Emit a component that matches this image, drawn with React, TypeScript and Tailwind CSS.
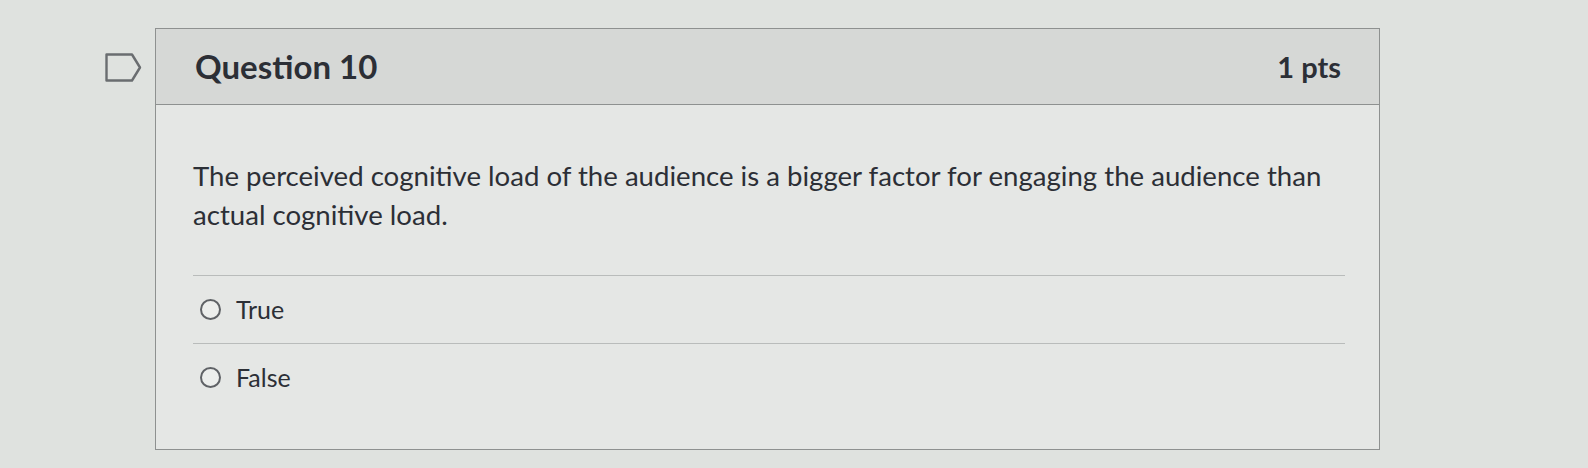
import { Fragment } from "react";

const ANSWERS = ["True", "False"];

function FlagIcon() {
  return (
    <svg width="37" height="29" viewBox="0 0 37 29" fill="none">
      <path d="M1.5 1.5 H27 L35 14.5 L27 27.5 H1.5 Z" stroke="#6a6d70" strokeWidth="2.4" strokeLinejoin="round" />
    </svg>
  );
}

export default function App() {
  return (
    <div className="w-[1588px] h-[468px] bg-[#dfe2df] font-['Lato','Liberation_Sans',sans-serif] text-[#2c2f36] overflow-hidden">
      <div className="flex pt-[28px] pl-[105px]">
        <div className="w-[50px] pt-[25px] shrink-0">
          <FlagIcon />
        </div>
        <div className="w-[1225px] h-[422px] border border-[#8e9190] bg-[#e5e7e5] flex flex-col">
          {/* Header */}
          <div className="h-[76px] shrink-0 flex items-center justify-between pl-[39px] pr-[38px] bg-[#d6d8d6] border-b border-[#8e9190]">
            <span className="text-[33px] font-bold">Question 10</span>
            <span className="text-[29px] font-bold">1 pts</span>
          </div>

          {/* Body */}
          <div className="flex-1 pl-[37px] pr-[34px] pt-[51px]">
            <p className="text-[27.6px] leading-[39px] max-w-[1155px]">
              The perceived cognitive load of the audience is a bigger factor for engaging the audience than actual cognitive load.
            </p>
            <div className="mt-[41px]">
              {ANSWERS.map(a => (
                <Fragment key={a}>
                  <div className="h-px bg-[#b9bcbb]" />
                  <div className="h-[67px] flex items-center gap-[15px] pl-[7px]">
                    <span className="w-[21px] h-[21px] rounded-full border-2 border-[#5f6266] bg-[#eceeec] shrink-0" />
                    <span className="text-[25px]">{a}</span>
                  </div>
                </Fragment>
              ))}
            </div>
          </div>
        </div>
      </div>
    </div>
  );
}
